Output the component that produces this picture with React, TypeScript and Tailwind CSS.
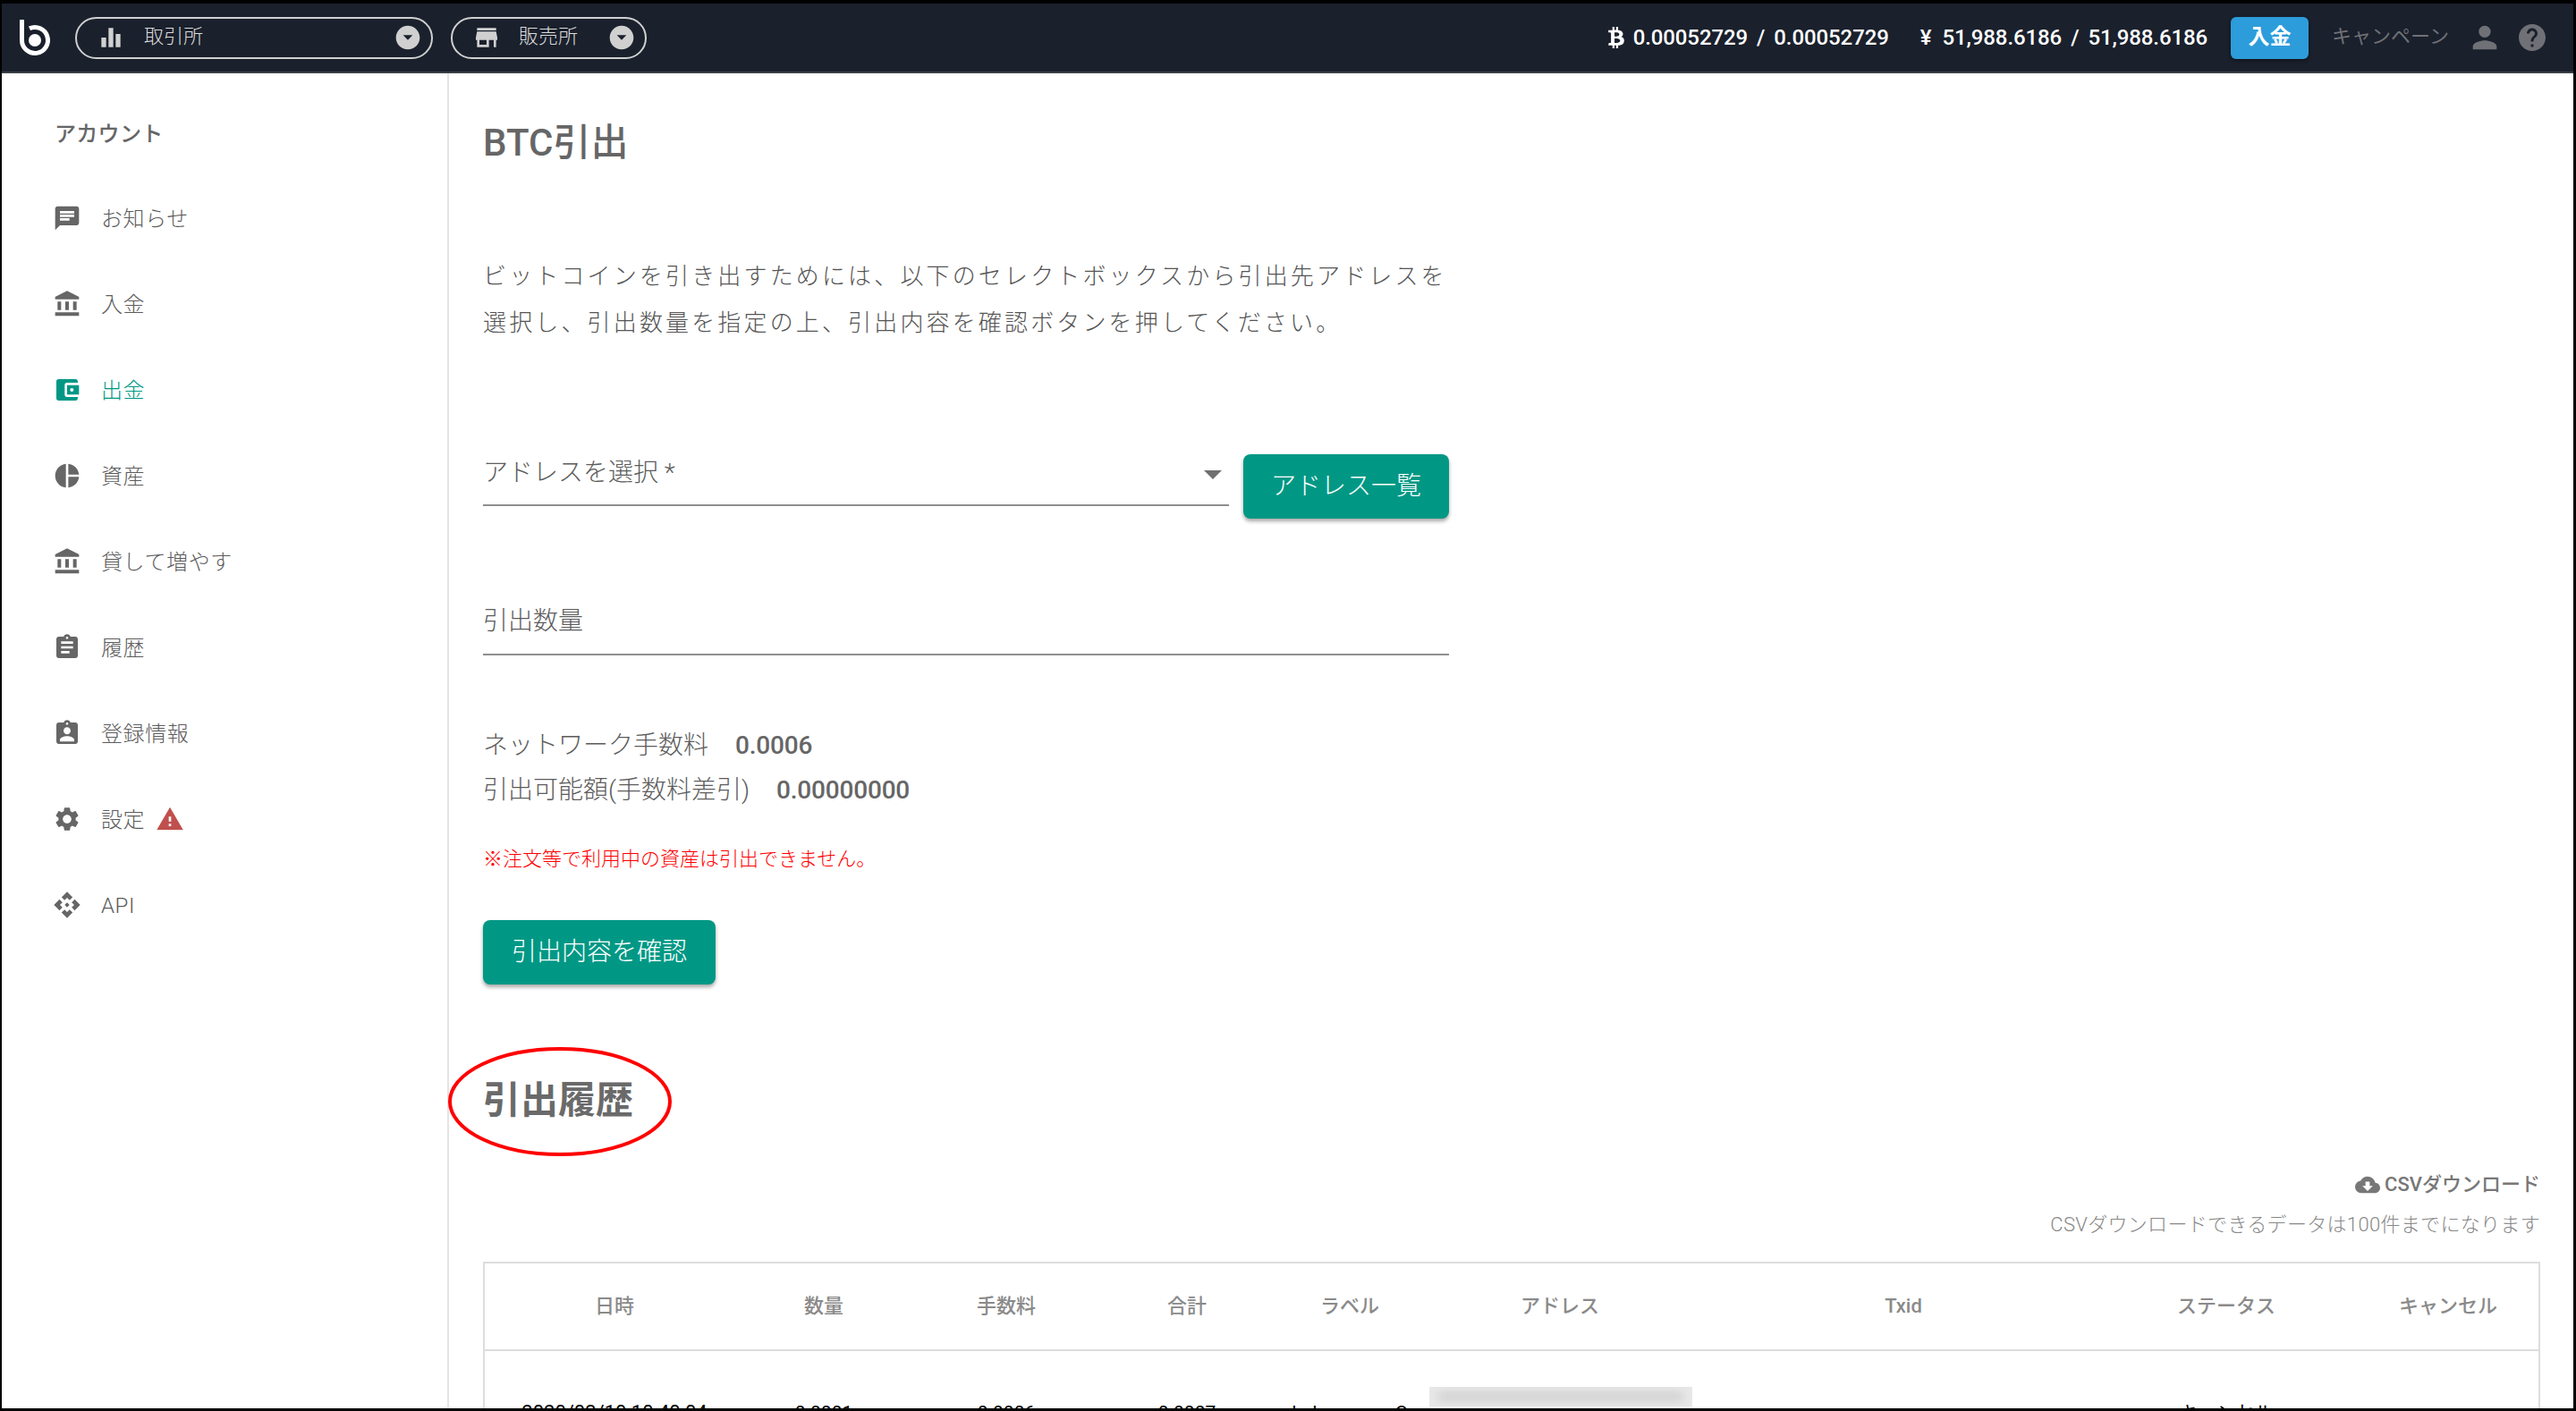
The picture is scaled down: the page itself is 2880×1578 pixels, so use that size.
import React from "react";
import { FaBtc } from "react-icons/fa";
import {
  MdEqualizer, MdStore, MdArrowDropDownCircle, MdPerson, MdHelp, MdChat, MdAccountBalance,
  MdAccountBalanceWallet, MdPieChart, MdAssignment, MdAssignmentInd, MdSettings, MdApi,
  MdWarning, MdArrowDropDown, MdCloudDownload,
} from "react-icons/md";

const nav = [
  { label: "お知らせ", Icon: MdChat },
  { label: "入金", Icon: MdAccountBalance },
  { label: "出金", Icon: MdAccountBalanceWallet, active: true },
  { label: "資産", Icon: MdPieChart },
  { label: "貸して増やす", Icon: MdAccountBalance },
  { label: "履歴", Icon: MdAssignment },
  { label: "登録情報", Icon: MdAssignmentInd },
  { label: "設定", Icon: MdSettings, warn: true },
  { label: "API", Icon: MdApi },
];

const cols = ["日時", "数量", "手数料", "合計", "ラベル", "アドレス", "Txid", "ステータス", "キャンセル"];

function Logo() {
  return (
    <svg viewBox="18 19 40 44" className="w-[40px] h-[44px] shrink-0">
      <path d="M22.5 21 V44 A14.5 14.5 0 1 0 31 30.8" fill="none" stroke="#ffffff" strokeWidth="5" />
      <circle cx="37" cy="44" r="7" fill="#ffffff" />
    </svg>
  );
}

function Pill({ w, Icon, label, iconGap }: { w: string; Icon: React.ComponentType<{ size?: number; className?: string }>; label: string; iconGap: string }) {
  return (
    <div className={`${w} h-[47px] flex items-center rounded-full border-2 border-[#d0d0d0] text-[#dddddd]`}>
      <Icon size={32} className="ml-[22px] shrink-0 text-[#d0d0d0]" />
      <span className={`${iconGap} pb-[2px] text-[22px] leading-[30px] font-light`}>{label}</span>
      <MdArrowDropDownCircle size={32} className="ml-auto mr-[10px] shrink-0 text-[#d0d0d0]" />
    </div>
  );
}

export default function App() {
  return (
    <div className="w-[2880px] h-[1578px] overflow-hidden bg-white border-t-4 border-l-2 border-r-[3px] border-b-[3px] border-black font-['Roboto','Noto_Sans_CJK_JP',sans-serif] text-[#666666]">
      <header className="h-[78px] bg-[#1a202c] border-b-2 border-[#3b3f47] flex items-center pl-[18px] pr-[28px]">
        <Logo />
        <div className="ml-[24px]">
          <Pill w="w-[400px]" Icon={MdEqualizer} label="取引所" iconGap="ml-[21px]" />
        </div>
        <div className="ml-[20px]">
          <Pill w="w-[219px]" Icon={MdStore} label="販売所" iconGap="ml-[20px]" />
        </div>
        <div className="ml-auto flex items-center">
          <div className="flex items-center text-white text-[24px] font-medium leading-[30px] tracking-[-0.1px]">
            <FaBtc className="w-[18px] h-[24px]" />
            <span className="ml-[10px]">0.00052729</span>
            <span className="ml-[10px] mr-[10px]">/</span>
            <span>0.00052729</span>
            <span className="ml-[35px]">¥</span>
            <span className="ml-[12px]">51,988.6186</span>
            <span className="ml-[10px] mr-[10px]">/</span>
            <span>51,988.6186</span>
          </div>
          <button className="ml-[26px] w-[87px] h-[47px] pb-[2px] bg-[#2d9cdb] rounded-[6px] text-white text-[24px] font-bold shadow-[0_2px_4px_rgba(0,0,0,0.4)]">入金</button>
          <span className="ml-[26px] pb-[2px] text-[22px] text-[#6f7176] leading-[30px]">キャンペーン</span>
          <MdPerson size={40} className="ml-[20px] text-[#6f7176]" />
          <MdHelp size={36} className="ml-[15px] text-[#6f7176]" />
        </div>
      </header>

      <div className="flex h-[1494px]">
        <aside className="w-[500px] shrink-0 border-r-2 border-[#e4e4e4] pt-[48px]">
          <div className="pl-[59px] pt-[2px] h-[36px] text-[24px] leading-[36px] font-medium tracking-[0.3px]">アカウント</div>
          <nav className="mt-[30px]">
            {nav.map(({ label, Icon, active, warn }) => (
              <div key={label} className={`h-[96px] flex items-center pl-[57px] ${active ? "text-[#009885]" : "text-[#5c5c5c]"}`}>
                <Icon size={32} className={`shrink-0 ${active ? "" : "text-[#666666]"}`} />
                <span className="ml-[22px] pt-[2px] text-[24px] leading-[32px] tracking-[0.6px] font-light">{label}</span>
                {warn && <MdWarning size={32} className="ml-[12px] text-[#c0504d]" />}
              </div>
            ))}
          </nav>
        </aside>

        <main className="flex-1 pl-[38px] pr-[37px] pt-[58px]">
          <h1 className="text-[42px] leading-[40px] font-medium">BTC引出</h1>
          <p className="mt-[102px] pt-[1px] h-[104px] text-[26px] leading-[52px] tracking-[3.15px] w-[1100px] font-light text-[#555555]">
            ビットコインを引き出すためには、以下のセレクトボックスから引出先アドレスを<br />
            選択し、引出数量を指定の上、引出内容を確認ボタンを押してください。
          </p>

          <div className="mt-[122px] flex items-start">
            <div className="w-[834px] h-[58px] border-b-2 border-[#8e8e8e] flex items-start justify-between">
              <span className="pt-[2px] text-[28px] leading-[38px] font-light text-[#5c5c5c]">アドレスを選択 *</span>
              <MdArrowDropDown size={48} className="mr-[-6px] mt-[-2px] text-[#707070]" />
            </div>
            <button className="ml-[16px] w-[230px] h-[72px] bg-[#009885] rounded-[8px] text-white text-[28px] font-light shadow-[0_3px_4px_rgba(0,0,0,0.35)]">アドレス一覧</button>
          </div>

          <div className="mt-[94px] pt-[2px] w-[1080px] h-[59px] border-b-2 border-[#8e8e8e] text-[28px] leading-[38px] font-light text-[#5c5c5c]">引出数量</div>

          <div className="mt-[74px] pt-[2px] h-[100px] text-[28px] leading-[50px] font-light text-[#5c5c5c]">
            <div>ネットワーク手数料<span className="ml-[30px] font-medium tracking-[-0.2px] text-[#666666]">0.0006</span></div>
            <div>引出可能額(手数料差引)<span className="ml-[30px] font-medium tracking-[-0.2px] text-[#666666]">0.00000000</span></div>
          </div>

          <div className="mt-[39px] text-[22px] leading-[30px] text-[#ff0000] font-light">※注文等で利用中の資産は引出できません。</div>

          <button className="mt-[53px] block w-[260px] h-[72px] bg-[#009885] rounded-[8px] text-white text-[28px] font-light shadow-[0_3px_4px_rgba(0,0,0,0.35)]">引出内容を確認</button>

          <div className="relative mt-[108px]">
            <h2 className="pt-[2px] h-[40px] text-[42px] leading-[40px] font-bold text-[#6a6a6a]">引出履歴</h2>
            <svg className="absolute left-[-39px] top-[-38px] w-[252px] h-[124px]" viewBox="0 0 252 124">
              <ellipse cx="125" cy="61" rx="123" ry="59" fill="none" stroke="#ff0000" strokeWidth="4" />
            </svg>
          </div>

          <div className="mt-[61px] flex justify-end items-center text-[22px] leading-[30px] font-medium text-[#777777]">
            <MdCloudDownload size={28} className="mr-[5px]" />
            CSVダウンロード
          </div>
          <div className="mt-[15px] text-right text-[22px] leading-[30px] tracking-[0.32px] font-light text-[#888888]">CSVダウンロードできるデータは100件までになります</div>

          <div className="mt-[26px] border-2 border-[#dddddd]">
            <div className="grid grid-cols-[290px_178px_230px_174px_190px_280px_488px_234px_232px] h-[98px] items-center text-center text-[22px] leading-[30px] font-medium text-[#8a8a8a] border-b-2 border-[#dddddd]">
              {cols.map((c, i) => (
                <div key={c} className={i === 8 ? "pl-[30px]" : ""}>{c}</div>
              ))}
            </div>
            <div className="grid grid-cols-[290px_178px_230px_174px_190px_280px_488px_234px_232px] text-center text-[21px] leading-[26px] text-black pt-[56px]">
              <div className="text-[22px]">2020/03/10 10:40:04</div>
              <div>0.0001</div>
              <div>0.0006</div>
              <div>0.0007</div>
              <div className="whitespace-nowrap">hak mamaa C</div>
              <div className="relative">
                <div className="absolute left-[-6px] top-[-16px] w-[294px] h-[22px] bg-[#e8e8e8] overflow-hidden">
                  <div className="mx-[10px] my-[5px] h-[12px] bg-[#d4d4d4] blur-[5px]" />
                </div>
              </div>
              <div />
              <div>キャンセル</div>
              <div />
            </div>
          </div>
        </main>
      </div>
    </div>
  );
}
